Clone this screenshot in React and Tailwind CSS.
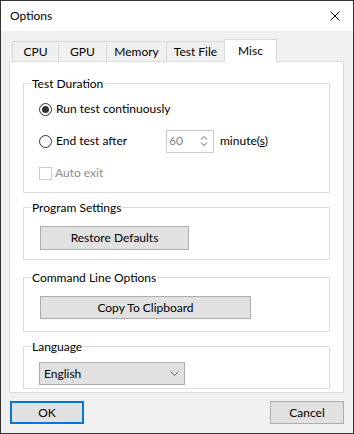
import React from "react";

function Radio({ checked }) {
  return (
    <span className="flex h-[13px] w-[13px] shrink-0 items-center justify-center rounded-full border border-[#333333] bg-white">
      {checked && <span className="h-[7px] w-[7px] rounded-full bg-[#333333]" />}
    </span>
  );
}

function Group({ title, className, children }) {
  return (
    <div className={`relative mx-[13px] border border-[#dcdcdc] ${className}`}>
      <span className="absolute -top-[8px] left-[7px] bg-white px-[1px] leading-[15px]">{title}</span>
      {children}
    </div>
  );
}

function Button({ label, className }) {
  return (
    <button
      type="button"
      className={`flex items-center justify-center bg-[#e1e1e1] text-black ${className}`}
    >
      {label}
    </button>
  );
}

const tabs = [
  { name: "CPU", w: "w-[46px]" },
  { name: "GPU", w: "w-[48px]" },
  { name: "Memory", w: "w-[60px]" },
  { name: "Test File", w: "w-[58px]" },
];

export default function App() {
  return (
    <div className="flex h-[434px] w-[354px] flex-col border border-[#333333] bg-[#f0f0f0] font-['Lato',sans-serif] text-[12px] text-black">
      {/* title bar */}
      <div className="flex h-[30px] items-center justify-between bg-white pl-[9px] pr-[10px]">
        <span className="text-[12px]">Options</span>
        <svg width="10" height="10" viewBox="0 0 10 10" className="mr-[3px]">
          <path d="M0.5 0.5 L9.5 9.5 M9.5 0.5 L0.5 9.5" stroke="#000" strokeWidth="1" />
        </svg>
      </div>

      <div className="pt-[8px]">
        {/* tabs */}
        <div className="ml-[11px] flex h-[22px] items-end">
          {tabs.map((t) => (
            <div
              key={t.name}
              className={`flex h-[20px] items-center justify-center border-l border-t border-[#d9d9d9] ${t.w}`}
            >
              {t.name}
            </div>
          ))}
          <div className="relative z-10 -mb-px flex h-[23px] w-[53px] items-start justify-center border-x border-t border-[#d9d9d9] bg-white pt-[2px]">
            Misc
          </div>
        </div>

        {/* tab panel */}
        <div className="ml-[8px] flex h-[332px] w-[335px] flex-col border border-[#d9d9d9] bg-white">
          <Group title="Test Duration" className="mt-[21px] h-[110px] pl-[15px] pt-[15px]">
            <div className="flex h-[20px] items-center gap-[4px]">
              <Radio checked />
              <span>Run test continuously</span>
            </div>
            <div className="mt-[11px] flex h-[22px] items-center">
              <div className="flex w-[127px] items-center gap-[4px]">
                <Radio />
                <span>End test after</span>
              </div>
              <div className="flex h-[23px] w-[48px] items-center justify-between border border-[#cccccc] pl-[2px] pr-[5px] text-[#7d8494]">
                <span>60</span>
                <svg width="8" height="12" viewBox="0 0 8 12">
                  <path d="M1 4.5 L4 1.5 L7 4.5 M1 7.5 L4 10.5 L7 7.5" fill="none" stroke="#606060" strokeWidth="1" />
                </svg>
              </div>
              <span className="ml-[6px]">
                minute(<span className="underline">s</span>)
              </span>
            </div>
            <div className="mt-[11px] flex h-[20px] items-center gap-[3px]">
              <span className="h-[13px] w-[13px] border border-[#cccccc] bg-white" />
              <span className="text-[#8c8c8c]">Auto exit</span>
            </div>
          </Group>

          <Group title="Program Settings" className="mt-[14px] h-[53px] pl-[16px] pt-[18px]">
            <Button label="Restore Defaults" className="h-[24px] w-[149px] border border-[#adadad]" />
          </Group>

          <Group title="Command Line Options" className="mt-[17px] h-[55px] pl-[16px] pt-[18px]">
            <Button label="Copy To Clipboard" className="h-[23px] w-[211px] border border-[#adadad]" />
          </Group>

          <Group title="Language" className="mt-[14px] h-[43px] pl-[15px] pt-[15px]">
            <div className="flex h-[23px] w-[146px] items-center justify-between border border-[#adadad] bg-[#e1e1e1] pl-[4px] pr-[5px]">
              <span>English</span>
              <svg width="9" height="6" viewBox="0 0 9 6">
                <path d="M0.5 0.5 L4.5 4.5 L8.5 0.5" fill="none" stroke="#606060" strokeWidth="1" />
              </svg>
            </div>
          </Group>
        </div>

        {/* dialog buttons */}
        <div className="mx-[9px] mt-[8px] flex justify-between">
          <Button label="OK" className="h-[23px] w-[74px] border-2 border-[#0078d7]" />
          <Button label="Cancel" className="h-[23px] w-[74px] border border-[#adadad]" />
        </div>
      </div>
    </div>
  );
}
